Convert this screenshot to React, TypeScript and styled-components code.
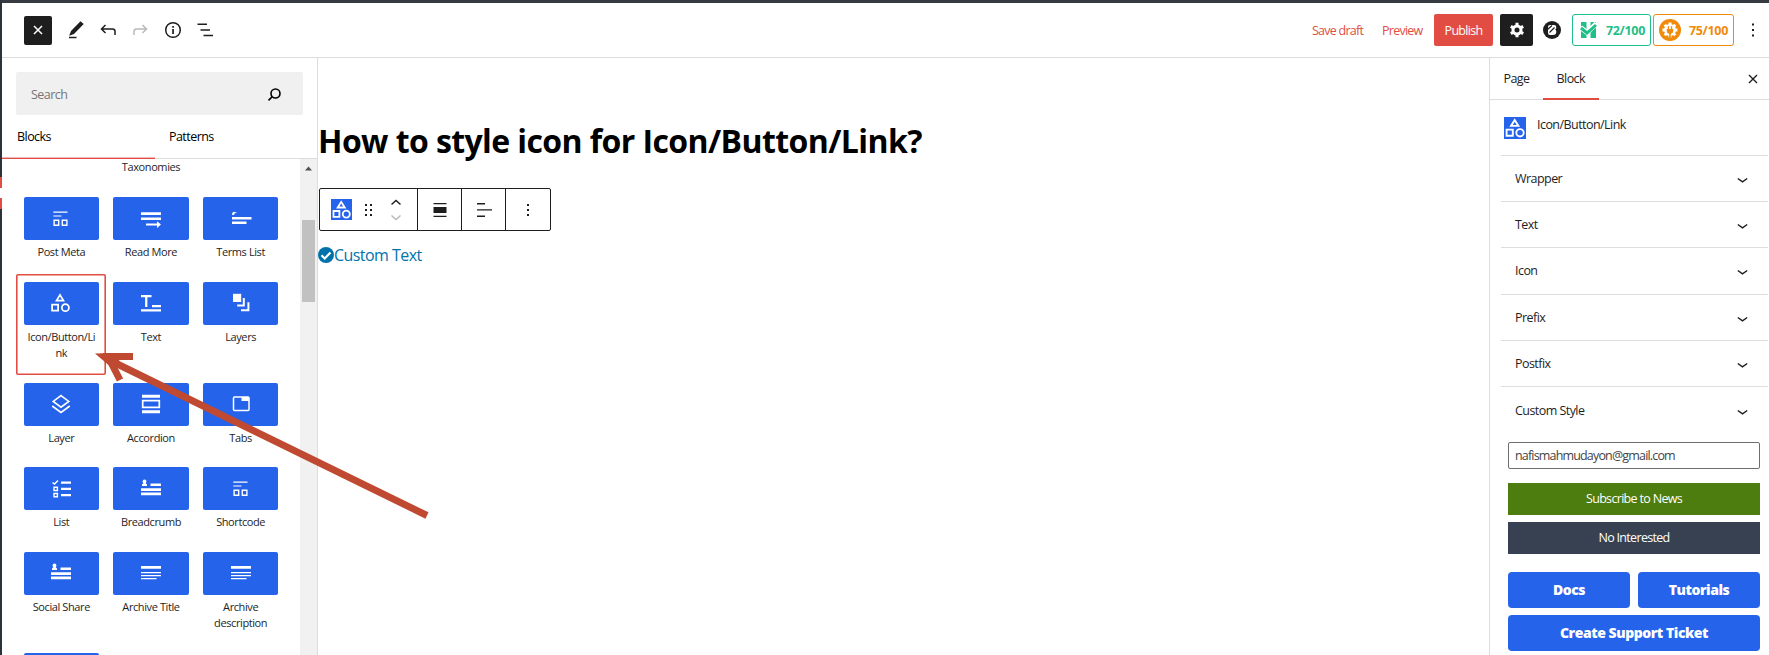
import React from 'react';
import styled, { createGlobalStyle, css } from 'styled-components';

const blue = '#2563eb';
const red = '#e14d43';
const ink = '#1e1e1e';
const line = '#dddddd';

const GlobalStyle = createGlobalStyle`
  * { box-sizing: border-box; }
  html, body { margin: 0; padding: 0; background: #fff; overflow: hidden; }
  body { font-family: 'Open Sans', 'Noto Sans', sans-serif; font-size: 12.5px; color: ${ink}; }
  button, input { font: inherit; color: inherit; border: 0; padding: 0; margin: 0; background: none; letter-spacing: inherit; }
  svg { display: block; flex: none; }
`;

const Screen = styled.div`
  position: relative;
  width: 1769px;
  height: 655px;
  border-top: 3px solid #363b42;
  border-left: 2px solid #2c3338;
  display: flex;
  flex-direction: column;
  letter-spacing: -0.55px;
  font-stretch: 88%;
`;

const Header = styled.header`
  flex: none;
  height: 55px;
  border-bottom: 1px solid ${line};
  display: flex;
  align-items: center;
  justify-content: space-between;
  padding: 0 9px 0 22px;
`;

const Tools = styled.div`
  display: flex;
  align-items: center;
  gap: 8px;
`;

const InserterToggle = styled.button`
  width: 28px;
  height: 29px;
  margin-right: 4px;
  border-radius: 2px;
  background: ${ink};
  color: #fff;
  display: grid;
  place-items: center;
`;

const Actions = styled.div`
  display: flex;
  align-items: center;
`;

const TextAction = styled.button<{ $w: number }>`
  width: ${(p) => p.$w}px;
  text-align: left;
  color: ${red};
  white-space: nowrap;
  letter-spacing: -0.75px;
`;

const Publish = styled.button`
  width: 59px;
  height: 32px;
  border-radius: 2px;
  background: ${red};
  color: #fff;
  letter-spacing: -0.7px;
`;

const Settings = styled.button`
  width: 33px;
  height: 32px;
  margin: 0 10px 0 7px;
  border-radius: 2px;
  background: ${ink};
  color: #fff;
  display: grid;
  place-items: center;
`;

const Score = styled.button<{ $color: string; $w: number }>`
  width: ${(p) => p.$w}px;
  height: 32px;
  margin-right: 2px;
  padding: 0 5px;
  border: 1px solid ${(p) => p.$color};
  border-radius: 3px;
  color: ${(p) => p.$color};
  font-weight: 700;
  letter-spacing: -0.3px;
  display: flex;
  align-items: center;
  justify-content: space-between;
`;

const Body = styled.div`
  flex: 1;
  min-height: 0;
  display: flex;
`;

const Inserter = styled.aside`
  width: 316px;
  flex: none;
  border-right: 1px solid ${line};
  display: flex;
  flex-direction: column;
`;

const SearchBox = styled.div`
  flex: none;
  height: 43px;
  margin: 14px 14px 0;
  padding: 2px 21px 0 15px;
  border-radius: 2px;
  background: #f0f0f0;
  color: #757575;
  display: flex;
  align-items: center;
  justify-content: space-between;
`;

const InserterTabs = styled.div`
  flex: none;
  display: flex;
  height: 44px;
`;

const InserterTab = styled.button<{ $active?: boolean }>`
  flex: none;
  width: ${(p) => (p.$active ? 153 : 162)}px;
  height: 44px;
  padding: 0 0 0 ${(p) => (p.$active ? 15 : 14)}px;
  text-align: left;
  color: #000;
  border-bottom: 1px solid ${line};
  ${(p) => p.$active && css`border-bottom: 1.5px solid ${red}; box-shadow: inset 0 -1px #f3b7b3;`}
`;

const ScrollArea = styled.div`
  flex: 1;
  min-height: 0;
  display: flex;
  overflow: hidden;
`;

const BlockPane = styled.div`
  width: 298px;
  padding: 0 14px;
`;

const BlockGrid = styled.div`
  display: grid;
  grid-template-columns: repeat(3, 89.67px);
  grid-template-rows: 84.5px 101px 84.5px 84.5px 101px 84.5px;
`;

const Carry = styled.div`
  height: 30px;
  line-height: 16px;
  font-size: 11px;
  letter-spacing: -0.4px;
  text-align: center;
  color: ${ink};
`;

const BlockItem = styled.button<{ $selected?: boolean }>`
  display: flex;
  flex-direction: column;
  padding: 8px 6.6px 0 7.6px;
  ${(p) => p.$selected && css`box-shadow: inset 0 0 0 1.6px ${red}; border-radius: 2px;`}
`;

const Tile = styled.span`
  align-self: stretch;
  height: 43px;
  flex: none;
  border-radius: 2px;
  background: ${blue};
  color: #fff;
  display: grid;
  place-items: center;
`;

const BlockLabel = styled.span`
  padding: 4px 0 0;
  width: 100%;
  font-size: 11px;
  line-height: 16px;
  letter-spacing: -0.4px;
  text-align: center;
  white-space: pre-line;
`;

const ScrollTrack = styled.div`
  width: 17px;
  background: #f1f1f1;
  display: flex;
  flex-direction: column;
  align-items: center;
  padding-top: 7px;
`;

const ScrollThumb = styled.div`
  width: 13px;
  height: 82px;
  margin-top: 49px;
  background: #c1c1c1;
`;

const Canvas = styled.main`
  flex: 1;
  min-width: 0;
`;

const Title = styled.h1`
  margin: 61px 0 0 0;
  height: 44px;
  line-height: 44px;
  font-size: 32px;
  font-weight: 700;
  letter-spacing: -0.59px;
  font-stretch: 100%;
  color: #000;
  white-space: nowrap;
`;

const Toolbar = styled.div`
  width: 232px;
  height: 43px;
  margin: 25px 0 0 1px;
  border: 1px solid ${ink};
  border-radius: 2px;
  display: flex;
`;

const ToolGroup = styled.div<{ $w: number }>`
  width: ${(p) => p.$w}px;
  display: flex;
  align-items: center;
  justify-content: center;
  & + & { border-left: 1px solid ${ink}; }
`;

const MoverGroup = styled(ToolGroup)`
  justify-content: flex-start;
  padding-left: 11px;
  gap: 9px;
  & > svg:last-child { margin-left: -6px; }
`;

const CustomText = styled.div`
  margin-top: 13px;
  height: 22px;
  display: flex;
  align-items: center;
  color: #0073aa;
  font-size: 16px;
  font-stretch: 100%;
  letter-spacing: -0.55px;
`;

const Sidebar = styled.aside`
  width: 280px;
  flex: none;
  border-left: 1px solid ${line};
`;

const SideTabs = styled.div`
  height: 42px;
  border-bottom: 1px solid ${line};
  display: flex;
  align-items: stretch;
  padding-right: 11px;
  & > svg { margin: auto 0 auto auto; }
`;

const SideTab = styled.button<{ $active?: boolean; $w: number }>`
  width: ${(p) => p.$w}px;
  height: 42px;
  padding-left: 13.5px;
  text-align: left;
  border-bottom: 2px solid ${(p) => (p.$active ? red : 'transparent')};
`;

const BlockCard = styled.div`
  height: 54.5px;
  padding: 17px 0 0 14px;
  display: flex;
  gap: 11px;
`;

const CardName = styled.div`
  line-height: 16px;
`;

const PanelRow = styled.button`
  width: 267px;
  height: 46.4px;
  margin-left: 11px;
  padding: 0 20.5px 0 14px;
  border-top: 1px solid ${line};
  display: flex;
  align-items: center;
  justify-content: space-between;
  & > svg { margin-top: 4px; }
`;

const Promo = styled.div`
  padding: 9px 9px 0 18px;
  display: flex;
  flex-direction: column;
`;

const Email = styled.input`
  height: 27px;
  padding: 0 6px;
  border: 1px solid #6e6e6e;
  border-radius: 2px;
  color: #444;
  letter-spacing: -0.83px;
`;

const FlatButton = styled.button<{ $bg: string; $top: number }>`
  height: 32px;
  margin-top: ${(p) => p.$top}px;
  background: ${(p) => p.$bg};
  color: #fff;
  letter-spacing: -0.68px;
`;

const LinkRow = styled.div<{ $top: number }>`
  display: flex;
  gap: 8px;
  margin-top: ${(p) => p.$top}px;
`;

const LinkButton = styled.button`
  flex: 1;
  height: 36px;
  border-radius: 4px;
  background: ${blue};
  color: #fff;
  font-size: 14px;
  font-weight: 800;
  font-stretch: 100%;
  letter-spacing: -0.45px;
`;

const Pointer = styled.svg`
  position: absolute;
  left: -2px;
  top: -3px;
  pointer-events: none;
`;

const EdgeMarks = styled.svg`
  position: absolute;
  left: -2px;
  top: 174px;
`;

const CategoryShapes = () => (
  <g fill="none" stroke="currentColor" strokeWidth="1.8">
    <path d="M11 3.9 7.6 9.6h6.8z" />
    <path d="M3.1 13.6h6v6h-6z" />
    <circle cx="16.4" cy="16.7" r="3.5" />
  </g>
);

const BlockBadge = ({ size }: { size: number }) => (
  <svg width={size} height={size} viewBox="0 0 22 22">
    <rect width="22" height="22" fill={blue} />
    <g fill="none" stroke="#fff" strokeWidth="1.9">
      <path d="M10.7 3 7 8.9h7.4z" />
      <path d="M2.6 12.6h6.2v6.2H2.6z" />
      <circle cx="16" cy="15.8" r="3.7" />
    </g>
  </svg>
);

const glyphs: Record<string, React.ReactNode> = {
  meta: <><path d="M4.3 4.5h14.2v1.2H4.3zM4.3 8.4h8.2v1.2H4.3z" /><path d="M5.1 13.3h4.6v5H5.1zM13.3 13.3h4.6v5h-4.6z" fill="none" stroke="currentColor" strokeWidth="1.4" /></>,
  more: <path d="M2 5.2h20V8H2zM2 10.4h20V13H2zM7 16.6h11v-2.4l4 3.3-4 3.4v-2.3H7z" />,
  terms: <path d="M3 10h19.5v2.5H3zM3 14.4h14.5v2.7H3zM3.5 5.5l1.5-.7 3 1-2.5.7-.5 1.500H3z" />,
  icon: <CategoryShapes />,
  text: <path d="M2 4h10.5v2.2H8.4V16H6.1V6.2H2zM13 14h9v2.3h-9zM2 18.2h20v2.4H2z" />,
  layers: <><path d="M4 2.8h8.2v8.2H4z" /><path d="M14.8 7v7.6H8.2M19.4 11.2v8H12" fill="none" stroke="currentColor" strokeWidth="2" /></>,
  layer: <g fill="none" stroke="currentColor" strokeWidth="1.6"><path d="m12 3.6 7.8 5.8-7.8 5.8-7.8-5.8z" /><path d="m3.2 14 8.8 6.4 8.8-6.4" /></g>,
  accordion: <><path d="M3 2.8h18v3H3zM3 18.2h18v3H3z" /><path d="M3.7 8.7h16.6v6.6H3.7z" fill="none" stroke="currentColor" strokeWidth="1.7" /></>,
  tabs: <><rect x="4.5" y="5" width="15.5" height="13.5" rx="1" fill="none" stroke="currentColor" strokeWidth="1.5" /><path d="M12.5 5H20v4h-7.5z" /></>,
  list: <><path d="M12 4.5h10v2.2H12zM12 10.7h10v2.2H12zM12 17h10v2.2H12z" /><path d="m3.5 5.5 2 1.6L9 3.5M5 10.3h3.4v3.2H5zM5 16.5h3.4v3.2H5z" fill="none" stroke="currentColor" strokeWidth="1.4" /></>,
  crumb: <><circle cx="5.5" cy="4.4" r="1.9" /><path d="M3 9V7.6L4.5 6h2L8 7.6V9zM11.5 6.4H22V9H11.5zM2 11.2h20V14H2zM2 15.5h20v2.8H2z" /></>,
  archive: <path d="M2 5h20v2.8H2zM2 11h20v1.3H2zM2 14h20v1.3H2zM2 17h15.5v1.3H2z" />,
};

const TileIcon = ({ name }: { name: string }) => (
  <svg width="24" height="24" viewBox="0 0 24 24" fill="currentColor">{glyphs[name]}</svg>
);

const Cross = ({ width = 1.5 }) => (
  <svg width="10" height="10" viewBox="0 0 10 10"><path d="m1 1 8 8M9 1 1 9" stroke="currentColor" strokeWidth={width} /></svg>
);

const Chevron = () => (
  <svg width="11" height="7" viewBox="0 0 11 7"><path d="M.8 1.5 5.5 4.8l4.700-3.300" fill="none" stroke={ink} strokeWidth="1.500" /></svg>
);

const blocks: [string, string][] = [
  ['Post Meta', 'meta'], ['Read More', 'more'], ['Terms List', 'terms'],
  ['Icon/Button/Li\nnk', 'icon'], ['Text', 'text'], ['Layers', 'layers'],
  ['Layer', 'layer'], ['Accordion', 'accordion'], ['Tabs', 'tabs'],
  ['List', 'list'], ['Breadcrumb', 'crumb'], ['Shortcode', 'meta'],
  ['Social Share', 'crumb'], ['Archive Title', 'archive'], ['Archive\ndescription', 'archive'],
  ['', ''],
];

const panels = ['Wrapper', 'Text', 'Icon', 'Prefix', 'Postfix', 'Custom Style'];

export default function App() {
  return (
    <Screen>
      <GlobalStyle />
      <Header>
        <Tools>
          <InserterToggle><Cross /></InserterToggle>
          <svg width="24" height="24" viewBox="0 0 24 24" fill={ink}>
            <path d="M16.5 3.2 19.7 6 10 16l-4.8 1.8L7 13zM5 18.8h7.5v1.5H5z" />
          </svg>
          <svg width="24" height="24" viewBox="0 0 24 24" fill="none" stroke={ink} strokeWidth="1.5">
            <path d="M9.5 7 5.5 11l4 4M5.5 11h11q2.500 0 2.500 2.500V17" />
          </svg>
          <svg width="24" height="24" viewBox="0 0 24 24" fill="none" stroke="#b9b9b9" strokeWidth="1.5">
            <path d="m14.5 7 4 4-4 4M18.5 11h-10Q6 11 6 13.500V17" />
          </svg>
          <svg width="24" height="24" viewBox="0 0 24 24">
            <circle cx="13" cy="12" r="7.3" fill="none" stroke={ink} strokeWidth="1.5" />
            <path d="M12.2 8h1.700v1.700h-1.700zM12.200 11h1.700v5h-1.700z" fill={ink} />
          </svg>
          <svg width="24" height="24" viewBox="0 0 24 24" fill={ink}>
            <path d="M5.500 5.500H15V7H5.500zM8.500 11.300H18v1.500H8.500zM11.500 16.800H21v1.500h-9.500z" />
          </svg>
        </Tools>
        <Actions>
          <TextAction $w={70}>Save draft</TextAction>
          <TextAction $w={52}>Preview</TextAction>
          <Publish>Publish</Publish>
          <Settings>
            <svg width="16" height="16" viewBox="0 0 16 16">
              <g fill="none" stroke="#fff">
                <circle cx="8" cy="8" r="4" strokeWidth="3" />
                <path d="M8 .8v2.500M8 12.700v2.500M1.800 4.400l2.100 1.200M12.100 10.400l2.100 1.200M1.800 11.600l2.100-1.200M12.100 5.600l2.100-1.200" strokeWidth="3" />
              </g>
            </svg>
          </Settings>
          <svg width="29" height="18" viewBox="0 0 29 18">
            <circle cx="9" cy="9" r="9" fill={ink} />
            <path d="M7 4h4q2.300 0 2.300 2.300 0 1.400-1 2.200 1 .8 1 2.200 0 3.300-3.300 3.300H7q-2 0-2-2V6q0-2 2-2z" fill="#fff" />
            <path d="m4.500 8.500 4.500-4M6.500 11.500l5-5" stroke={ink} strokeWidth="1.200" />
          </svg>
          <Score $color="#1fbf88" $w={79}>
            <svg width="22" height="18" viewBox="0 0 22 18">
              <path d="M3 1h5.500v16H3zM12.500 1H18v16h-5.500z" fill="#1fbf88" />
              <path d="m2.500 6.500 6.500 5L18.500 2.500" fill="none" stroke="#fff" strokeWidth="5" />
              <path d="m3 7 6 5 9-8" fill="none" stroke="#1fbf88" strokeWidth="3" />
            </svg>
            <span>72/100</span>
          </Score>
          <Score $color="#f08a0b" $w={81}>
            <svg width="22" height="22" viewBox="0 0 22 22">
              <circle cx="11" cy="11" r="11" fill="#f08a0b" />
              <circle cx="11" cy="11" r="6" fill="#fff" />
              <path d="M11 3.500v15M3.500 11h15M5.700 5.700l10.600 10.600M16.300 5.700 5.700 16.300" stroke="#fff" strokeWidth="3" />
              <path d="M7.800 10h6.400v2q0 2.500-2.400 2.800V19h-1.600v-4.200Q7.800 14.500 7.800 12zM8.800 7.200h1.300V10H8.800zM11.900 7.200h1.300V10h-1.300z" fill="#f08a0b" />
            </svg>
            <span>75/100</span>
          </Score>
          <svg width="24" height="20" viewBox="0 0 24 20" fill={ink}>
            <path d="M16 3.500h2v2h-2zM16 9h2v2h-2zM16 14.500h2v2h-2z" />
          </svg>
        </Actions>
      </Header>

      <Body>
        <Inserter>
          <SearchBox>
            <span>Search</span>
            <svg width="15" height="14" viewBox="0 0 15 14" fill="none" stroke="#000" strokeWidth="1.6">
              <circle cx="8.5" cy="5.5" r="4.5" /><path d="M5.3 8.700 1.500 12.300" />
            </svg>
          </SearchBox>
          <InserterTabs>
            <InserterTab $active>Blocks</InserterTab>
            <InserterTab>Patterns</InserterTab>
          </InserterTabs>
          <ScrollArea>
            <BlockPane>
              <Carry>Taxonomies</Carry>
              <BlockGrid>
                {blocks.map(([label, icon], i) => (
                  <BlockItem key={i} $selected={icon === 'icon'}>
                    <Tile>{icon && <TileIcon name={icon} />}</Tile>
                    <BlockLabel>{label}</BlockLabel>
                  </BlockItem>
                ))}
              </BlockGrid>
            </BlockPane>
            <ScrollTrack>
              <svg width="7" height="5" viewBox="0 0 7 5"><path d="M3.5.5 7 4.500H0z" fill="#505050" /></svg>
              <ScrollThumb />
            </ScrollTrack>
          </ScrollArea>
        </Inserter>

        <Canvas>
          <Title>How to style icon for Icon/Button/Link?</Title>
          <Toolbar>
            <MoverGroup $w={97}>
              <BlockBadge size={21} />
              <svg width="26" height="20" viewBox="0 0 26 20" fill={ink}>
                {[4, 9, 14].map((y) => <path key={y} d={`M4 ${y}h2v2H4zM9 ${y}h2v2H9z`} />)}
              </svg>
              <svg width="12" height="24" viewBox="0 0 12 24" fill="none" strokeWidth="1.5">
                <path d="m1.5 6.500 4.500-4 4.500 4" stroke={ink} /><path d="m1.500 17.500 4.500 4 4.500-4" stroke="#b9b9b9" />
              </svg>
            </MoverGroup>
            <ToolGroup $w={44}>
              <svg width="14" height="16" viewBox="0 0 14 16" fill={ink}><path d="M.5 1h13v1.300H.5zM.5 5h13v6H.5zM.5 13.700h13V15H.5z" /></svg>
            </ToolGroup>
            <ToolGroup $w={44}>
              <svg width="16" height="16" viewBox="0 0 16 16" fill={ink}><path d="M1 1h8v1.400H1zM1 7.200h15v1.400H1zM1 13.500h8v1.400H1z" /></svg>
            </ToolGroup>
            <ToolGroup $w={45}>
              <svg width="20" height="20" viewBox="0 0 20 20" fill={ink}><path d="M9 4h2v2H9zM9 9h2v2H9zM9 14h2v2H9z" /></svg>
            </ToolGroup>
          </Toolbar>
          <CustomText>
            <svg width="16" height="16" viewBox="0 0 16 16">
              <circle cx="8" cy="8" r="8" fill="#0073aa" />
              <path d="m3.5 8.300 3.200 3.200 5.800-6" fill="none" stroke="#fff" strokeWidth="2.200" />
            </svg>
            <span>Custom Text</span>
          </CustomText>
        </Canvas>

        <Sidebar>
          <SideTabs>
            <SideTab $w={53}>Page</SideTab>
            <SideTab $w={56} $active>Block</SideTab>
            <Cross width={1.4} />
          </SideTabs>
          <BlockCard>
            <BlockBadge size={22} />
            <CardName>Icon/Button/Link</CardName>
          </BlockCard>
          {panels.map((name) => <PanelRow key={name}><span>{name}</span><Chevron /></PanelRow>)}
          <Promo>
            <Email defaultValue="nafismahmudayon@gmail.com" />
            <FlatButton $bg="#4d7c0f" $top={14}>Subscribe to News</FlatButton>
            <FlatButton $bg="#374151" $top={7}>No Interested</FlatButton>
            <LinkRow $top={18}><LinkButton>Docs</LinkButton><LinkButton>Tutorials</LinkButton></LinkRow>
            <LinkRow $top={7}><LinkButton>Create Support Ticket</LinkButton></LinkRow>
          </Promo>
        </Sidebar>
      </Body>

      <EdgeMarks width="2" height="34" viewBox="0 0 2 34" fill={red}>
        <rect width="2" height="11" /><rect y="11" width="2" height="10" fill="#fff" /><rect y="21" width="2" height="11" />
      </EdgeMarks>
      <Pointer width="440" height="540" viewBox="0 0 440 540" fill="none" stroke="#bf4a31" strokeWidth="7">
        <path d="M427 515.5 106 358.500" />
        <path d="M133 356.500H108L120 380" />
        <path d="m95 353.500 18-.500 7 8.500-8 6.500z" fill="#bf4a31" stroke="none" />
      </Pointer>
    </Screen>
  );
}
